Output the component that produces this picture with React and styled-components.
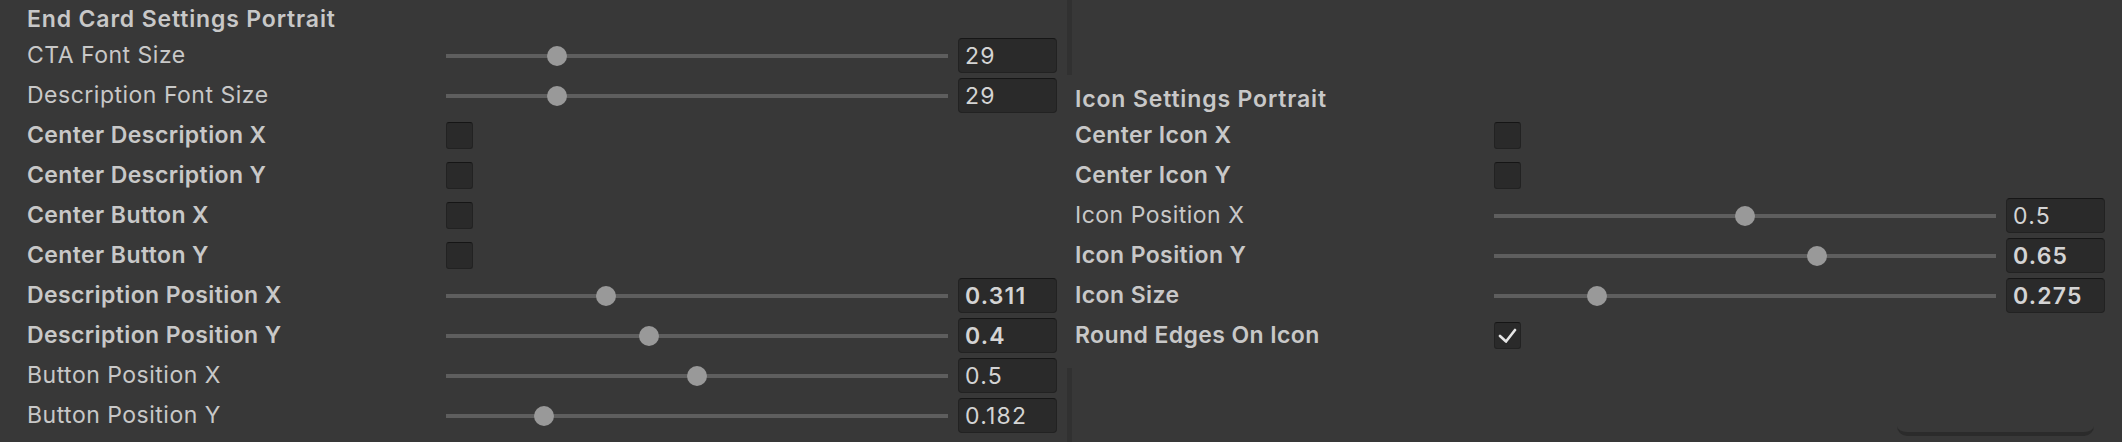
import React from "react"
import styled, { createGlobalStyle } from "styled-components"

const GlobalStyle = createGlobalStyle`
  html, body {
    margin: 0;
    padding: 0;
    background: #383838;
  }
  body {
    font-family: Inter, "Noto Sans", sans-serif;
    overflow: hidden;
  }
`

const Page = styled.div`
  display: flex;
  flex-direction: row;
  width: 2122px;
  height: 442px;
  background: #383838;
`

const Column = styled.div`
  display: flex;
  flex-direction: column;
  box-sizing: border-box;
  width: ${props => props.width}px;
  padding-left: ${props => props.padLeft}px;
  padding-top: ${props => props.padTop || 0}px;
`

const Gutter = styled.div`
  display: flex;
  flex-direction: column;
  justify-content: space-between;
  width: 5px;
`

const GutterLine = styled.div`
  width: 5px;
  height: ${props => props.h}px;
  background: #313131;
`

const Header = styled.div`
  box-sizing: border-box;
  height: 35px;
  padding-top: 4px;
  line-height: 30px;
  font-size: 23px;
  letter-spacing: 0.85px;
  font-weight: 600;
  color: #c8c8c8;
  white-space: nowrap;
`

const Row = styled.div`
  display: flex;
  flex-direction: row;
  align-items: center;
  height: 40px;
`

const Label = styled.div`
  width: 419px;
  height: 40px;
  flex: none;
  font-size: 23px;
  letter-spacing: ${props => (props.bold ? 0.4 : 0.5)}px;
  line-height: 41px;
  font-weight: ${props => (props.bold ? 600 : 400)};
  color: #c8c8c8;
  white-space: nowrap;
`

const Track = styled.div`
  position: relative;
  width: 502px;
  height: 35px;
  flex: none;

  &::before {
    content: "";
    position: absolute;
    left: 0;
    right: 0;
    top: 16px;
    height: 4px;
    background: #5e5e5e;
  }
`

const Thumb = styled.div`
  position: absolute;
  top: 8px;
  width: 20px;
  height: 20px;
  border-radius: 50%;
  background: #999999;
`

const Field = styled.div`
  box-sizing: border-box;
  margin-left: 10px;
  width: 99px;
  height: 35px;
  flex: none;
  background: #2a2a2a;
  border: 1px solid #222222;
  border-top-color: #161616;
  border-radius: 4px;
  padding-left: 6px;
  font-size: 23px;
  letter-spacing: 1.2px;
  line-height: 35px;
  font-weight: ${props => (props.bold ? 600 : 400)};
  color: #d4d4d4;
  overflow: hidden;
`

const Box = styled.div`
  box-sizing: border-box;
  width: 27px;
  height: 27px;
  flex: none;
  background: #2a2a2a;
  border: 1px solid #222222;
  border-top-color: #151515;
  border-radius: 3px;
  display: flex;
  align-items: center;
  justify-content: center;
`

const FoldoutEdge = styled.div`
  align-self: flex-end;
  margin-top: 57px;
  margin-right: 28px;
  width: 197px;
  height: 20px;
  border-bottom: 4px solid #2b2b2b;
  border-radius: 0 0 10px 10px;
`

const Slider = ({ label, bold, value, pos }) => (
  <Row>
    <Label bold={bold}>{label}</Label>
    <Track>
      <Thumb style={{ left: `calc(${pos} * (100% - 20px))` }} />
    </Track>
    <Field bold={bold}>{value}</Field>
  </Row>
)

const Toggle = ({ label, bold, checked }) => (
  <Row>
    <Label bold={bold}>{label}</Label>
    <Box>
      {checked && (
        <svg width="19" height="15" viewBox="0 0 19 15">
          <polyline
            points="2,8 8,13.5 17,2"
            fill="none"
            stroke="#e6e6e6"
            strokeWidth="2.6"
            strokeLinecap="round"
            strokeLinejoin="round"
          />
        </svg>
      )}
    </Box>
  </Row>
)

const App = () => {
  return (
    <>
      <GlobalStyle />
      <Page>
        <Column width={1067} padLeft={27}>
          <Header>End Card Settings Portrait</Header>
          <Slider label="CTA Font Size" value="29" pos={0.21} />
          <Slider label="Description Font Size" value="29" pos={0.21} />
          <Toggle label="Center Description X" bold />
          <Toggle label="Center Description Y" bold />
          <Toggle label="Center Button X" bold />
          <Toggle label="Center Button Y" bold />
          <Slider label="Description Position X" bold value="0.311" pos={0.311} />
          <Slider label="Description Position Y" bold value="0.4" pos={0.4} />
          <Slider label="Button Position X" value="0.5" pos={0.5} />
          <Slider label="Button Position Y" value="0.182" pos={0.182} />
        </Column>
        <Gutter>
          <GutterLine h={75} />
          <GutterLine h={74} />
        </Gutter>
        <Column width={1050} padLeft={3} padTop={80}>
          <Header>Icon Settings Portrait</Header>
          <Toggle label="Center Icon X" bold />
          <Toggle label="Center Icon Y" bold />
          <Slider label="Icon Position X" value="0.5" pos={0.5} />
          <Slider label="Icon Position Y" bold value="0.65" pos={0.65} />
          <Slider label="Icon Size" bold value="0.275" pos={0.193} />
          <Toggle label="Round Edges On Icon" bold checked />
          <FoldoutEdge />
        </Column>
      </Page>
    </>
  )
}

export default App
